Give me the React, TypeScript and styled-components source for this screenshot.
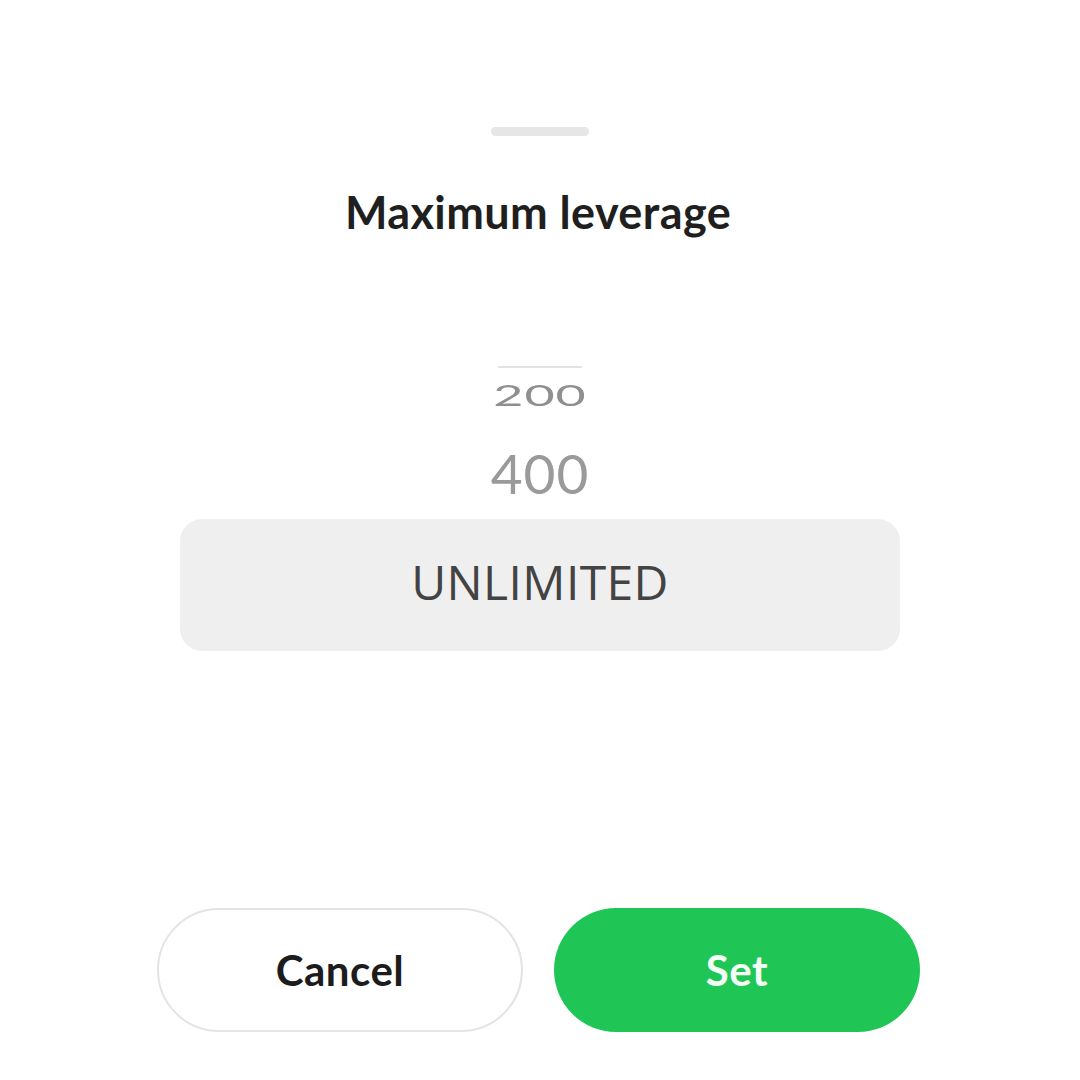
import React from "react";
import styled, { createGlobalStyle } from "styled-components";

const Global = createGlobalStyle`
  html, body { margin: 0; padding: 0; background: #ffffff; }
  #root { width: 1080px; height: 1080px; }
`;

const Sheet = styled.div`
  width: 1080px;
  height: 1080px;
  box-sizing: border-box;
  background: #ffffff;
  display: flex;
  flex-direction: column;
  align-items: center;
  padding-top: 127px;
`;

const Handle = styled.div`
  width: 98px;
  height: 9px;
  border-radius: 5px;
  background: #e6e6e6;
`;

const Title = styled.h1`
  margin: 48px 0 0;
  font-family: Lato, "Noto Sans", sans-serif;
  font-weight: 700;
  font-size: 45px;
  line-height: 56px;
  color: #1f1f1f;
  letter-spacing: 0.4px;
  padding-right: 4px;
`;

const Wheel = styled.div`
  margin-top: 126px;
  width: 720px;
  display: flex;
  flex-direction: column;
  align-items: center;
`;

const GhostLine = styled.div`
  width: 84px;
  height: 2px;
  background: #e2e2e2;
  border-radius: 1px;
`;

const Item = styled.div<{ $size: number; $squash: number; $color: string; $gap: number }>`
  margin-top: ${(p) => p.$gap}px;
  font-family: Lato, "Noto Sans", sans-serif;
  font-weight: 400;
  font-size: ${(p) => p.$size}px;
  line-height: ${(p) => p.$size}px;
  letter-spacing: 1px;
  color: ${(p) => p.$color};
  transform: scaleY(${(p) => p.$squash});
  filter: blur(0.6px);
`;

const Selected = styled.div`
  margin-top: 18px;
  width: 720px;
  height: 132px;
  box-sizing: border-box;
  padding-bottom: 8px;
  border-radius: 22px;
  background: #efefef;
  display: flex;
  align-items: center;
  justify-content: center;
  font-family: "Open Sans", "Noto Sans", sans-serif;
  font-weight: 400;
  font-size: 48px;
  color: #434343;
  letter-spacing: 0.4px;
`;

const Spacer = styled.div`
  flex: 1;
`;

const Buttons = styled.div`
  display: flex;
  gap: 31px;
  margin-bottom: 48px;
  margin-right: 3px;
`;

const Button = styled.button<{ $primary?: boolean }>`
  width: 366px;
  height: 124px;
  border-radius: 62px;
  box-sizing: border-box;
  border: ${(p) => (p.$primary ? "none" : "2px solid #e4e4e4")};
  background: ${(p) => (p.$primary ? "#1fc655" : "#ffffff")};
  color: ${(p) => (p.$primary ? "#f4fff6" : "#1c1c1c")};
  font-family: Lato, "Noto Sans", sans-serif;
  font-weight: 700;
  font-size: 42px;
  letter-spacing: 0.5px;
  cursor: pointer;
`;

export default function App() {
  return (
    <>
      <Global />
      <Sheet>
        <Handle />
        <Title>Maximum leverage</Title>
        <Wheel>
          <GhostLine />
          <Item $size={52} $squash={0.55} $color="#8f8f8f" $gap={1}>
            200
          </Item>
          <Item $size={55} $squash={1} $color="#9a9a9a" $gap={25}>
            400
          </Item>
          <Selected>UNLIMITED</Selected>
        </Wheel>
        <Spacer />
        <Buttons>
          <Button>Cancel</Button>
          <Button $primary>Set</Button>
        </Buttons>
      </Sheet>
    </>
  );
}
